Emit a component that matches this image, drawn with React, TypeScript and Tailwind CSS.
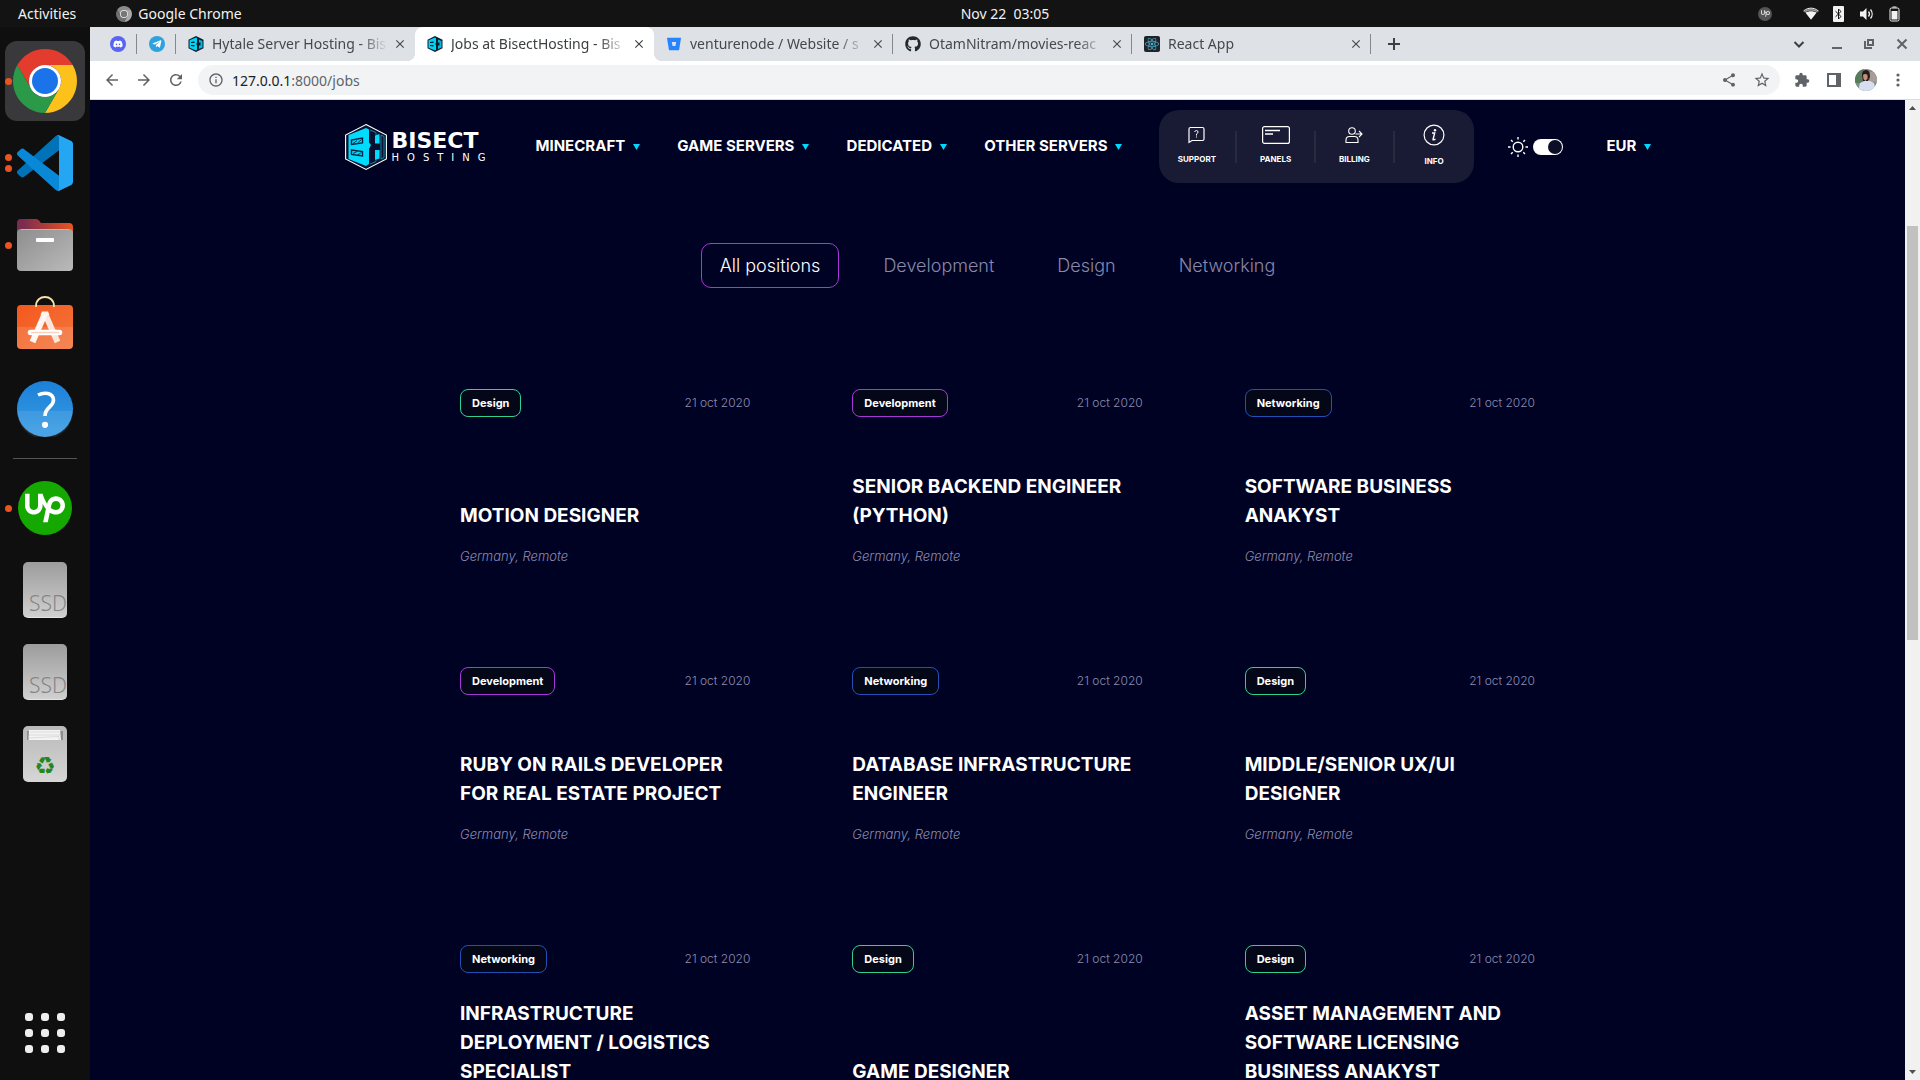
import type { ReactNode } from "react";
import { FaDiscord, FaGithub, FaReact, FaTelegramPlane } from "react-icons/fa";
import { SiBitbucket, SiUpwork } from "react-icons/si";
import {
  MdArrowBack,
  MdArrowForward,
  MdClose,
  MdExtension,
  MdInfoOutline,
  MdRefresh,
  MdShare,
  MdStarBorder,
} from "react-icons/md";

type Category = "Design" | "Development" | "Networking";

interface Job {
  category: Category;
  title: string;
}

const JOBS: Job[] = [
  { category: "Design", title: "MOTION DESIGNER" },
  { category: "Development", title: "SENIOR BACKEND ENGINEER\n(PYTHON)" },
  { category: "Networking", title: "SOFTWARE BUSINESS\nANAKYST" },
  { category: "Development", title: "RUBY ON RAILS DEVELOPER\nFOR REAL ESTATE PROJECT" },
  { category: "Networking", title: "DATABASE INFRASTRUCTURE\nENGINEER" },
  { category: "Design", title: "MIDDLE/SENIOR UX/UI\nDESIGNER" },
  { category: "Networking", title: "INFRASTRUCTURE\nDEPLOYMENT / LOGISTICS\nSPECIALIST" },
  { category: "Design", title: "GAME DESIGNER" },
  { category: "Design", title: "ASSET MANAGEMENT AND\nSOFTWARE LICENSING\nBUSINESS ANAKYST" },
];

const TAG_BORDER: Record<Category, string> = {
  Design: "border-[#2fd193]",
  Development: "border-[#a936d8]",
  Networking: "border-[#2450b4]",
};

/* ---------- Desktop shell ---------- */

function ChromeLogo({ mono = false, className }: { mono?: boolean; className: string }) {
  return (
    <svg viewBox="0 0 64 64" className={className} aria-hidden="true">
      <path d="M4.3 16A32 32 0 0 1 59.7 16H32A16 16 0 0 0 18.1 40Z" fill={mono ? "#8a8a8a" : "#e33b2e"} />
      <path d="M59.7 16A32 32 0 0 1 32 64L45.9 40A16 16 0 0 0 32 16Z" fill={mono ? "#a8a8a8" : "#fcc11a"} />
      <path d="M32 64A32 32 0 0 1 4.3 16L18.1 40A16 16 0 0 0 45.9 40Z" fill={mono ? "#707070" : "#2b9a48"} />
      <circle cx="32" cy="32" r="16" fill="#fff" />
      <circle cx="32" cy="32" r="13" fill={mono ? "#777" : "#1a73e8"} />
    </svg>
  );
}

function TopBar() {
  return (
    <header className="grid h-[27px] shrink-0 grid-cols-3 items-center bg-[#131313] text-[14px] text-[#f2f2f2]">
      <div className="flex items-center pl-[18px]">
        <button type="button">Activities</button>
        <button type="button" className="ml-10 flex items-center gap-[6px]">
          <ChromeLogo mono className="size-4" />
          Google Chrome
        </button>
      </div>
      <time className="pl-[90px] text-center whitespace-pre">Nov 22  03:05</time>
      <div className="flex items-center justify-end pr-[19px]">
        <span className="mr-[31px] grid size-[14px] place-items-center rounded-full bg-[#555]">
          <SiUpwork className="size-[9px] text-[#d8d8d8]" />
        </span>
        <svg viewBox="0 0 16 14" className="mr-[14px] h-[14px] w-4" aria-label="Wi-Fi">
          <path d="M1 4.4C5 .8 11 .8 15 4.4L14 5.4C10.500 3.200 5.500 3.200 2 5.400Z" fill="#999" />
          <path d="M.5 4C5 .2 11 .2 15.500 4" stroke="#f2f2f2" fill="none" />
          <path d="M2.500 5.800C5.500 3.800 10.500 3.800 13.500 5.800L8 12.800Z" fill="#f2f2f2" />
        </svg>
        <svg viewBox="0 0 11 16" className="mr-[15px] h-4 w-[11px]" aria-label="Bluetooth">
          <rect width="11" height="16" rx="1" fill="#f2f2f2" />
          <path d="M2.500 5.200L8 10.500L5.500 13V3L8 5.500L2.500 10.800" stroke="#131313" fill="none" />
        </svg>
        <svg viewBox="0 0 16 14" className="mr-[14px] h-[14px] w-4" aria-label="Volume">
          <path d="M1 4.500H4L7.500 1V13L4 9.500H1Z" fill="#f2f2f2" />
          <path d="M9.500 4.500A4 4 0 0 1 9.500 9.500M11.500 2.500A7 7 0 0 1 11.500 11.500" stroke="#f2f2f2" fill="none" strokeWidth="1.300" />
        </svg>
        <svg viewBox="0 0 12 16" className="h-4 w-3" aria-label="Battery">
          <rect x="1" y="2" width="9" height="13" rx="1.500" stroke="#f2f2f2" fill="none" />
          <path d="M3.500 1H7.500" stroke="#f2f2f2" />
          <rect x="2.500" y="5" width="6" height="8.500" fill="#f2f2f2" />
        </svg>
      </div>
    </header>
  );
}

function DockItem({ label, dots = 0, active = false, children }: { label: string; dots?: number; active?: boolean; children: ReactNode }) {
  return (
    <li className="relative">
      <button
        type="button"
        aria-label={label}
        className={`grid size-20 place-items-center rounded-xl ${active ? "bg-[#39393b]" : ""}`}
      >
        {children}
      </button>
      <span className="absolute top-0 left-0 flex h-full flex-col justify-center gap-1">
        {Array.from({ length: dots }, (_, i) => (
          <span key={i} className="size-[7px] rounded-full bg-[#e95420]" />
        ))}
      </span>
    </li>
  );
}

function VsCodeLogo() {
  return (
    <svg viewBox="0 0 100 100" className="size-14" aria-hidden="true">
      <path fill="#0072b8" d="M96.461 10.796L75.857.876C73.472-.273 70.622.212 68.750 2.083L1.299 63.583C-.516 65.237-.514 68.094 1.303 69.745L6.813 74.754C8.298 76.104 10.535 76.204 12.134 74.990L93.361 13.370C96.086 11.303 100 13.246 100 16.667V16.427C100 14.027 98.625 11.838 96.461 10.796Z" />
      <path fill="#0a88d8" d="M96.461 89.204L75.857 99.124C73.472 100.273 70.622 99.788 68.750 97.917L1.299 36.417C-.516 34.763-.514 31.906 1.303 30.255L6.813 25.246C8.298 23.896 10.535 23.796 12.134 25.010L93.361 86.630C96.086 88.697 100 86.754 100 83.333V83.573C100 85.974 98.625 88.162 96.461 89.204Z" />
      <path fill="#25a6f3" d="M75.858 99.126C73.472 100.274 70.622 99.789 68.750 97.917C71.056 100.223 75 98.590 75 95.328V4.672C75 1.410 71.056-.223 68.750 2.083C70.622.211 73.472-.274 75.858.874L96.459 10.781C98.623 11.822 100 14.011 100 16.413V83.587C100 85.989 98.623 88.179 96.459 89.220L75.858 99.126Z" />
    </svg>
  );
}

function FilesLogo() {
  return (
    <svg viewBox="0 0 56 56" className="size-14" aria-hidden="true">
      <defs>
        <linearGradient id="folderBack">
          <stop offset="0.100" stopColor="#7a2b50" />
          <stop offset="1" stopColor="#ea5420" />
        </linearGradient>
        <linearGradient id="folderFront" x2="1" y2="1">
          <stop stopColor="#8d8d8d" />
          <stop offset="1" stopColor="#bababa" />
        </linearGradient>
      </defs>
      <path d="M0 6Q0 2 4 2H19Q21 2 22 3.500L24 6H52Q56 6 56 10V20H0Z" fill="url(#folderBack)" />
      <rect y="12" width="56" height="42" rx="4" fill="url(#folderFront)" />
      <path d="M4 12.500H52" stroke="#b9b9b9" />
      <rect x="19" y="21" width="18" height="4" rx="1" fill="#fff" />
    </svg>
  );
}

function SoftwareLogo() {
  return (
    <svg viewBox="0 2 56 56" className="size-14 overflow-visible" aria-hidden="true">
      <defs>
        <linearGradient id="bag" x2="1" y2="1">
          <stop stopColor="#f4581d" />
          <stop offset="1" stopColor="#f3763d" />
        </linearGradient>
      </defs>
      <rect y="8" width="56" height="44" rx="4" fill="url(#bag)" />
      <path d="M0 30H56V48Q56 52 52 52H4Q0 52 0 48Z" fill="#fff" fillOpacity="0.120" />
      <path d="M19 10V9C19 -3 37 -3 37 9V10" stroke="#f8e0a8" strokeWidth="1.800" fill="none" />
      <path d="M28 16.500L40.500 45" stroke="#fde6dc" strokeWidth="6" />
      <path d="M28 16.500L15.500 45" stroke="#fff8f2" strokeWidth="6" />
      <path d="M25 14.500H31L32.500 18H23.500Z" fill="#fff4ec" />
      <path d="M13.500 35.500H42.500" stroke="#fff" strokeWidth="5.500" strokeLinecap="round" />
      <path d="M14 35.500H42" stroke="#fbd0bd" strokeWidth="1.500" />
    </svg>
  );
}

function HelpLogo() {
  return (
    <svg viewBox="0 0 56 56" className="size-14" aria-hidden="true">
      <defs>
        <linearGradient id="help" x2="0" y2="1">
          <stop stopColor="#1b80d8" />
          <stop offset="1" stopColor="#3a9de4" />
        </linearGradient>
      </defs>
      <circle cx="28" cy="28" r="28" fill="url(#help)" />
      <path d="M0 30A28 28 0 0 0 56 30Z" fill="#fff" fillOpacity="0.090" />
      <path d="M21 14C27 11 36 11.500 36.500 19C36.500 26 28 26 28 35" stroke="#fff" strokeWidth="3.600" fill="none" />
      <circle cx="28" cy="43.800" r="3.100" fill="#fff" />
    </svg>
  );
}

function DiskLogo() {
  return (
    <span className="flex h-14 w-11 items-end overflow-hidden rounded-[5px] border-b border-[#e3e3e3] bg-linear-to-b from-[#9c9c9c] to-[#d0d0d0] pl-[6px] font-['Noto_Sans'] text-[21px] leading-7 font-light text-[#858585]">
      SSD
    </span>
  );
}

function TrashLogo() {
  return (
    <span className="flex h-14 w-11 flex-col items-center rounded-[5px] bg-linear-to-b from-[#b9b9b9] to-[#d6d6d6] pt-[3px]">
      <svg viewBox="0 0 36 11" className="h-[11px] w-9" aria-hidden="true">
        <path d="M0 2H36V11H0Z" fill="#8d8d8d" />
        <path d="M2 1H33L34 11H1.500Z" fill="#f4f4f4" />
        <path d="M3 3H34M2 6H34M2 9L32 7.500V11" stroke="#cfcfcf" fill="none" strokeWidth="0.700" />
      </svg>
      <span className="mt-[14px] font-['DejaVu_Sans'] text-[24px] leading-6 text-[#24861d]" aria-hidden="true">♻</span>
    </span>
  );
}

function Dock() {
  return (
    <nav aria-label="Dock" className="flex w-[90px] shrink-0 flex-col justify-between bg-[#0f0f10] px-[5px] pt-[14px] pb-[27px]">
      <ul className="flex flex-col gap-[2px]">
        <DockItem label="Google Chrome" dots={1} active><ChromeLogo className="size-16" /></DockItem>
        <DockItem label="Visual Studio Code" dots={2}><VsCodeLogo /></DockItem>
        <DockItem label="Files" dots={1}><FilesLogo /></DockItem>
        <DockItem label="Ubuntu Software"><SoftwareLogo /></DockItem>
        <DockItem label="Help"><HelpLogo /></DockItem>
        <li role="separator" className="mx-2 my-[7px] h-px bg-[#555558]" />
        <DockItem label="Upwork" dots={1}>
          <span className="grid size-[54px] place-items-center rounded-full bg-[#14a800]">
            <SiUpwork className="size-10 text-white" />
          </span>
        </DockItem>
        <DockItem label="First disk"><DiskLogo /></DockItem>
        <DockItem label="Second disk"><DiskLogo /></DockItem>
        <DockItem label="Trash"><TrashLogo /></DockItem>
      </ul>
      <button type="button" aria-label="Show applications" className="grid grid-cols-3 gap-2 self-center">
        {Array.from({ length: 9 }, (_, i) => (
          <span key={i} className="size-2 rounded-[3px] bg-[#eeeeec]" />
        ))}
      </button>
    </nav>
  );
}

/* ---------- Browser chrome ---------- */

function BisectFavicon() {
  return (
    <svg viewBox="0 0 16 16" className="size-4 shrink-0" aria-hidden="true">
      <path d="M8 0L15.500 3.700V12.300L8 16L.5 12.300V3.700Z" fill="#0b1a2c" />
      <path d="M1.500 4.200L8 1.500L9 2V6.500L8.300 8L9 9.500V14L8 14.500L1.500 11.800Z" fill="#00d4f5" />
      <path d="M11 3.500L14.500 5V11.500L11 13V9.500H12.500V6.500H11Z" fill="#00b9dc" />
      <path d="M3 6L6.500 5.500V7H3ZM3 9H6.500V10.500L3 10Z" fill="#0b1a2c" />
    </svg>
  );
}

function Tab({ icon, title, active = false, divider = false }: { icon: ReactNode; title: string; active?: boolean; divider?: boolean }) {
  return (
    <div
      role="tab"
      aria-selected={active}
      className={`relative flex w-[239px] items-center pr-2 pb-px pl-3 text-[14px] ${active ? "rounded-t-lg bg-white text-[#3c4043]" : "text-[#45494d]"}`}
    >
      {active && (
        <>
          <span className="absolute bottom-0 -left-2 size-2 bg-[radial-gradient(circle_at_0_0,transparent_8px,white_8px)]" />
          <span className="absolute -right-2 bottom-0 size-2 bg-[radial-gradient(circle_at_100%_0,transparent_8px,white_8px)]" />
        </>
      )}
      {icon}
      <span className="ml-2 flex-1 overflow-hidden whitespace-nowrap [mask-image:linear-gradient(to_right,black_calc(100%-28px),transparent)]">
        {title}
      </span>
      <button type="button" aria-label={`Close ${title}`} className="ml-[5px]">
        <MdClose className="size-[14px]" />
      </button>
      {divider && <span className="absolute top-[7px] right-0 h-5 w-px bg-[#85898e]" />}
    </div>
  );
}

function TabStrip() {
  return (
    <div className="flex h-[34px] justify-between bg-[#dee1e6] pl-2">
      <div role="tablist" className="flex">
        <div role="tab" aria-label="Discord" className="relative grid w-[39px] place-items-center">
          <span className="grid size-4 place-items-center rounded-full bg-[#5865f2]">
            <FaDiscord className="size-[10px] text-white" />
          </span>
          <span className="absolute top-[7px] right-0 h-5 w-px bg-[#85898e]" />
        </div>
        <div role="tab" aria-label="Telegram" className="relative grid w-[39px] place-items-center">
          <span className="grid size-4 place-items-center rounded-full bg-[#2ea2dc]">
            <FaTelegramPlane className="size-[10px] text-white" />
          </span>
          <span className="absolute top-[7px] right-0 h-5 w-px bg-[#85898e]" />
        </div>
        <Tab icon={<BisectFavicon />} title="Hytale Server Hosting - Bis" />
        <Tab icon={<BisectFavicon />} title="Jobs at BisectHosting - Bis" active />
        <Tab icon={<SiBitbucket className="size-4 shrink-0 p-px text-[#2684ff]" />} title="venturenode / Website / s" divider />
        <Tab icon={<FaGithub className="size-4 shrink-0 text-[#24292f]" />} title="OtamNitram/movies-reac" divider />
        <Tab
          icon={
            <span className="grid size-4 shrink-0 place-items-center rounded-[2px] bg-[#20232a]">
              <FaReact className="size-[14px] text-[#4fb8d3]" />
            </span>
          }
          title="React App"
          divider
        />
        <button type="button" aria-label="New tab" className="grid w-[46px] place-items-center text-[#3c4043]">
          <svg viewBox="0 0 12 12" className="size-3" aria-hidden="true">
            <path d="M6 0V12M0 6H12" stroke="currentColor" strokeWidth="2" />
          </svg>
        </button>
      </div>
      <div className="flex items-center gap-[22px] pr-3 text-[#5f6368]">
        <button type="button" aria-label="Search tabs" className="mr-[5px]">
          <svg viewBox="0 0 12 12" className="size-3" aria-hidden="true">
            <path d="M1.500 4L6 8.500L10.500 4" stroke="#3c4043" strokeWidth="2" fill="none" />
          </svg>
        </button>
        <button type="button" aria-label="Minimise">
          <svg viewBox="0 0 10 10" className="size-[10px]" aria-hidden="true">
            <path d="M0 9H10" stroke="currentColor" strokeWidth="2" />
          </svg>
        </button>
        <button type="button" aria-label="Restore">
          <svg viewBox="0 0 10 10" className="size-[10px]" aria-hidden="true">
            <path d="M4 1H9V6H4ZM1 2V9H8" stroke="currentColor" strokeWidth="2" fill="none" />
          </svg>
        </button>
        <button type="button" aria-label="Close window">
          <svg viewBox="0 0 12 12" className="size-3" aria-hidden="true">
            <path d="M1.500 1.500L10.500 10.500M10.500 1.500L1.500 10.500" stroke="currentColor" strokeWidth="2" />
          </svg>
        </button>
      </div>
    </div>
  );
}

function Toolbar() {
  return (
    <div className="flex h-[39px] items-center border-b border-[#dcdcdc] bg-white pr-5 pl-[13px] text-[#5f6368]">
      <div className="flex gap-[14px]">
        <button type="button" aria-label="Back"><MdArrowBack className="size-[18px]" /></button>
        <button type="button" aria-label="Forward"><MdArrowForward className="size-[18px]" /></button>
        <button type="button" aria-label="Reload"><MdRefresh className="size-[18px]" /></button>
      </div>
      <div className="ml-[13px] flex h-[30px] flex-1 items-center rounded-full bg-[#f1f3f4] pr-[9px] pl-[10px]">
        <MdInfoOutline className="size-4 shrink-0" />
        <p className="ml-2 flex-1 text-[14px]">
          <a href="#jobs"><span className="text-[#202124]">127.0.0.1</span>:8000/jobs</a>
        </p>
        <button type="button" aria-label="Share" className="mr-4"><MdShare className="size-4" /></button>
        <button type="button" aria-label="Bookmark"><MdStarBorder className="size-[18px]" /></button>
      </div>
      <button type="button" aria-label="Extensions" className="ml-[14px]"><MdExtension className="size-4" /></button>
      <button type="button" aria-label="Side panel" className="ml-[17px]">
        <svg viewBox="0 0 14 14" className="size-[14px]" aria-hidden="true">
          <path d="M1 1H13V13H1Z" stroke="currentColor" strokeWidth="2" fill="none" />
          <path d="M9 1H14V13H9Z" fill="currentColor" />
        </svg>
      </button>
      <button type="button" aria-label="Profile" className="ml-[14px]">
        <svg viewBox="0 0 22 22" className="size-[22px] rounded-full" aria-hidden="true">
          <rect width="22" height="22" fill="#7d8f84" />
          <path d="M0 0H9V14H0Z" fill="#5a7a5c" />
          <path d="M15 3H22V13H15Z" fill="#a99d98" />
          <path d="M3 22L5 14L10 11.500H14L19 14L21 22Z" fill="#d7def0" />
          <path d="M7 6Q7 1 11.500 1Q15 1 15 8L13 12H8Z" fill="#2a1a1c" />
          <path d="M8 6Q10 4 12.500 6V9.500L10.500 12L8.500 10Z" fill="#c98f79" />
        </svg>
      </button>
      <button type="button" aria-label="Menu" className="ml-[19px]">
        <svg viewBox="0 0 4 14" className="h-[14px] w-1" aria-hidden="true" fill="currentColor">
          <circle cx="2" cy="2" r="1.600" />
          <circle cx="2" cy="7" r="1.600" />
          <circle cx="2" cy="12" r="1.600" />
        </svg>
      </button>
    </div>
  );
}

/* ---------- Page ---------- */

function Caret() {
  return (
    <svg viewBox="0 0 7 6" className="h-[6px] w-[7px]" aria-hidden="true">
      <path d="M0 0H7L3.500 6Z" fill="#00d9ff" />
    </svg>
  );
}

function Logo() {
  return (
    <a href="#home" aria-label="Bisect Hosting" className="flex w-[140px] shrink-0 items-center gap-[5px] text-white">
      <svg viewBox="0 0 42 46" className="h-[46px] w-[42px] shrink-0" aria-hidden="true">
        <path d="M21 .6L41.400 11V35L21 45.400L.6 35V11Z" fill="#0a1030" stroke="#fff" strokeWidth="1.100" />
        <path d="M3.500 11L21 4L24 5.500V18.500L26 21L24 25V40L21 42L3.500 35Z" fill="#00dcff" />
        <path d="M6.500 16L17.500 14V19L6.500 20.500ZM6.500 26L17.500 27.500V32L6.500 30.500Z" fill="#00dcff" stroke="#06233f" strokeWidth="1.400" />
        <path d="M8 19.500L12 16.500M12.500 19L16.500 15.500M8 29.500L12 27.500M12.500 31L16.500 28.500" stroke="#06233f" strokeWidth="0.900" />
        <path d="M30 11.500L34.500 10V19.500H30ZM30 26H34.500V34.500L30 36Z" fill="#00dcff" />
        <path d="M25 6L31 8.500M31 8.500V11M36 11L39 12.500V33.500L36 35M36 11V35M25 40L31 37.500V35" stroke="#0797b5" strokeWidth="0.900" fill="none" />
      </svg>
      <span className="flex flex-col font-['DejaVu_Sans'] font-bold">
        <span className="text-[22px] leading-[22px]">BISECT</span>
        <span className="text-[10px] leading-3 font-normal tracking-[0.800em]">HOSTING</span>
      </span>
    </a>
  );
}

const SHORTCUTS: { label: string; icon: ReactNode }[] = [
  {
    label: "SUPPORT",
    icon: (
      <svg viewBox="0 0 17 18" className="h-[18px] w-[17px]" fill="none" stroke="#fff" aria-hidden="true">
        <path d="M1 16.500V3Q1 1.500 2.500 1.500H14.500Q16 1.500 16 3V13Q16 14.500 14.500 14.500H4Z" strokeWidth="1.200" />
        <path d="M6.700 6Q7 4.500 8.500 4.500Q10.200 4.700 10 6.200Q9.700 7.500 8.500 8V9.500M8.500 10.500V11.500" />
      </svg>
    ),
  },
  {
    label: "PANELS",
    icon: (
      <svg viewBox="0 0 28 18" className="h-[18px] w-7" fill="none" stroke="#fff" aria-hidden="true">
        <rect x="0.600" y="0.600" width="26.800" height="16.800" rx="2" strokeWidth="1.200" />
        <path d="M3 4.500H18M3 8H11" strokeWidth="1.500" />
      </svg>
    ),
  },
  {
    label: "BILLING",
    icon: (
      <svg viewBox="0 0 18 18" className="size-[18px]" fill="none" stroke="#fff" strokeWidth="1.100" aria-hidden="true">
        <circle cx="7" cy="5" r="3.300" />
        <path d="M1 16.500V14Q1 10.500 4.500 10.500H9.500Q13 10.500 13 14V16.500Z" />
        <path d="M10.500 8H16.500M14 5L17 8L14 11" />
      </svg>
    ),
  },
  {
    label: "INFO",
    icon: (
      <svg viewBox="0 0 22 22" className="size-[22px]" fill="none" stroke="#fff" aria-hidden="true">
        <circle cx="11" cy="11" r="9.900" strokeWidth="1.200" />
        <path d="M9 9H11.700L10 15.500Q10.200 16.500 12.500 15" strokeWidth="1.400" />
        <circle cx="12" cy="6.200" r="1.200" fill="#fff" stroke="none" />
      </svg>
    ),
  },
];

function SiteHeader() {
  return (
    <header className="mx-auto flex max-w-[1306px] items-center pt-[10px] font-bold">
      <Logo />
      <nav aria-label="Main" className="mr-9 ml-[51px] flex flex-1 items-center justify-between text-[15px]">
        {["MINECRAFT", "GAME SERVERS", "DEDICATED", "OTHER SERVERS"].map((item) => (
          <button key={item} type="button" className="flex items-center gap-2 whitespace-nowrap">
            {item}
            <Caret />
          </button>
        ))}
      </nav>
      <ul className="grid h-[73px] w-[315px] grid-cols-4 items-center divide-x-2 divide-[#262b3e] rounded-[20px] bg-[#181b33]">
        {SHORTCUTS.map(({ label, icon }) => (
          <li key={label} className="flex h-8 items-center justify-center">
            <a href={`#${label.toLowerCase()}`} className="flex flex-col items-center gap-[10px] pb-[3px] text-[8px] leading-[10px]">
              {icon}
              {label}
            </a>
          </li>
        ))}
      </ul>
      <label className="ml-[34px] flex items-center gap-[5px]">
        <svg viewBox="0 0 20 20" className="size-5" fill="none" stroke="#fff" strokeWidth="1.400" aria-hidden="true">
          <circle cx="10" cy="10" r="4.800" />
          <path d="M10 0V2.500M10 17.500V20M0 10H2.500M17.500 10H20M3 3L4.700 4.700M15.300 15.300L17 17M17 3L15.300 4.700M4.700 15.300L3 17" />
        </svg>
        <input
          type="checkbox"
          role="switch"
          defaultChecked
          aria-label="Dark mode"
          className="flex h-4 w-[30px] appearance-none justify-end rounded-full bg-white p-px before:size-[14px] before:rounded-full before:bg-[#0b0e26]"
        />
      </label>
      <label className="ml-11 flex items-center gap-[7px] text-[15px]">
        <select aria-label="Currency" className="appearance-none">
          <option>EUR</option>
        </select>
        <Caret />
      </label>
    </header>
  );
}

function Filters() {
  return (
    <div className="mt-[60px] flex justify-center gap-[25px]">
      {["All positions", "Development", "Design", "Networking"].map((name, i) => (
        <button
          key={name}
          type="button"
          aria-pressed={i === 0}
          className={`h-[45px] rounded-[10px] border px-[18px] text-[18px] font-light ${
            i === 0 ? "border-[#a936d8] text-white" : "border-transparent text-[#8888ac]"
          }`}
        >
          {name}
        </button>
      ))}
    </div>
  );
}

function JobCard({ category, title }: Job) {
  return (
    <article className="flex flex-col">
      <div className="flex items-center justify-between">
        <span className={`flex h-7 items-center rounded-lg border bg-[#030717] px-[11px] text-[11px] font-bold ${TAG_BORDER[category]}`}>
          {category}
        </span>
        <time className="text-[12px] font-light text-[#8c8cb0]">21 oct 2020</time>
      </div>
      <h2 className="mt-[26px] flex h-[87px] items-end text-[19px] leading-[29px] font-bold whitespace-pre">{title}</h2>
      <p className="mt-4 text-[13px] leading-5 font-light text-[#8c8cb0] italic">Germany, Remote</p>
    </article>
  );
}

function PageScrollbar() {
  return (
    <div className="flex w-[15px] shrink-0 flex-col items-center justify-between bg-[#f1f1f1]" aria-hidden="true">
      <svg viewBox="0 0 15 15" className="size-[15px]"><path d="M4 10L7.500 6L11 10Z" fill="#505050" /></svg>
      <div className="flex w-full flex-1 flex-col px-[2px]">
        <div className="grow-[111]" />
        <div className="grow-[414] bg-[#c1c1c1]" />
        <div className="grow-[425]" />
      </div>
      <svg viewBox="0 0 15 15" className="size-[15px]"><path d="M4 5L7.500 9L11 5Z" fill="#505050" /></svg>
    </div>
  );
}

export default function App() {
  return (
    <div className="flex h-screen flex-col overflow-hidden font-['Noto_Sans',sans-serif]">
      <TopBar />
      <div className="flex min-h-0 flex-1">
        <Dock />
        <div className="flex min-w-0 flex-1 flex-col">
          <TabStrip />
          <Toolbar />
          <div className="flex min-h-0 flex-1">
            <div className="min-w-0 flex-1 overflow-hidden bg-[#000224] font-['Inter',sans-serif] text-white">
              <SiteHeader />
              <main>
                <Filters />
                <section aria-label="Open positions" className="mx-auto mt-[101px] grid max-w-[1075px] grid-cols-3 gap-x-[102px] gap-y-[101px]">
                  {JOBS.map((job) => (
                    <JobCard key={job.title} {...job} />
                  ))}
                </section>
              </main>
            </div>
            <PageScrollbar />
          </div>
        </div>
      </div>
    </div>
  );
}
